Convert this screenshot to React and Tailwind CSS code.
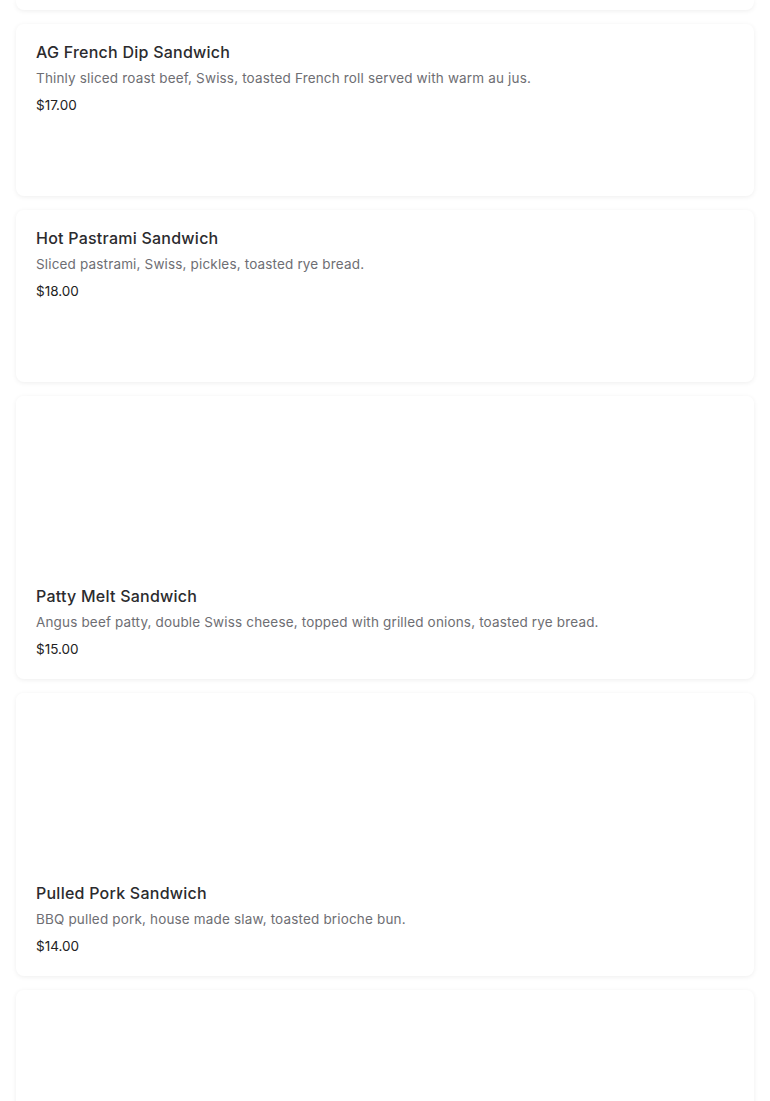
const items = [
  {
    name: "AG French Dip Sandwich",
    desc: "Thinly sliced roast beef, Swiss, toasted French roll served with warm au jus.",
    price: "$17.00",
    image: false,
  },
  {
    name: "Hot Pastrami Sandwich",
    desc: "Sliced pastrami, Swiss, pickles, toasted rye bread.",
    price: "$18.00",
    image: false,
  },
  {
    name: "Patty Melt Sandwich",
    desc: "Angus beef patty, double Swiss cheese, topped with grilled onions, toasted rye bread.",
    price: "$15.00",
    image: true,
  },
  {
    name: "Pulled Pork Sandwich",
    desc: "BBQ pulled pork, house made slaw, toasted brioche bun.",
    price: "$14.00",
    image: true,
  },
];

function MenuCard({ item }) {
  return (
    <div className="bg-white rounded-lg shadow-[0_1px_5px_rgba(0,0,0,0.07)] overflow-hidden flex flex-col min-h-[172px]">
      {item.image && <div className="h-[172px] bg-white" />}
      <div className="px-5 pt-[18px] pb-5">
        <h3 className="text-[16px] leading-5 font-medium text-[#2b2b2e] tracking-[0.015em]">{item.name}</h3>
        <p className="mt-[6px] text-[13.5px] leading-5 text-[#6e6e73] tracking-[0.012em]">{item.desc}</p>
        <p className="mt-[7px] text-[13.5px] leading-5 text-[#222]">{item.price}</p>
      </div>
    </div>
  );
}

export default function App() {
  return (
    <div className="min-h-screen bg-white px-4 flex flex-col gap-[14px] font-['Inter',sans-serif]">
      <div className="h-[10px] bg-white rounded-b-lg shadow-[0_1px_5px_rgba(0,0,0,0.07)]" />
      {items.map((item) => (
        <MenuCard key={item.name} item={item} />
      ))}
      <div className="h-[300px] bg-white rounded-lg shadow-[0_1px_5px_rgba(0,0,0,0.07)]" />
    </div>
  );
}
